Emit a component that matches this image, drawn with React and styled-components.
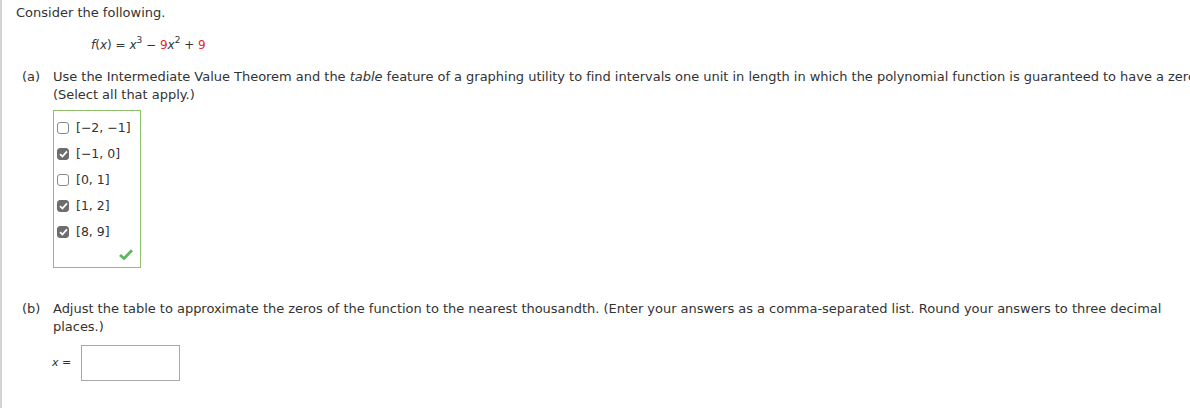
import React from "react";
import styled, { createGlobalStyle } from "styled-components";

const Global = createGlobalStyle`
  html, body { margin: 0; padding: 0; background: #fff; overflow: hidden; }
  body { font-family: "DejaVu Sans", Verdana, sans-serif; color: #333; }
`;

const Page = styled.div`
  width: 1190px;
  height: 408px;
  box-sizing: border-box;
  border-left: 2px solid #d4d4d4;
  padding: 4px 0 0 14px;
  font-size: 13px;
  line-height: 18px;
  overflow: hidden;
`;

const Intro = styled.div`
  margin: 0;
`;

const Formula = styled.div`
  margin: 14px 0 0 75px;
  font-size: 12px;
  white-space: nowrap;
`;

const It = styled.i`
  font-style: italic;
`;

const Red = styled.span`
  color: #e02b2b;
`;

const Sup = styled.sup`
  font-size: 9px;
  line-height: 0;
  position: relative;
  top: -1px;
`;

const Part = styled.div`
  display: flex;
  margin-top: ${(p) => p.$mt}px;
`;

const Label = styled.div`
  width: 37px;
  flex: none;
  padding-left: 6px;
  box-sizing: border-box;
`;

const Body = styled.div`
  flex: 1;
  min-width: 0;
`;

const Line = styled.div`
  white-space: nowrap;
  letter-spacing: -0.025px;
`;

const Answers = styled.div`
  margin-top: 6px;
  width: 88px;
  height: 158px;
  box-sizing: border-box;
  border: 1px solid #8cc06c;
  padding: 4px 0 0 3px;
  position: relative;
`;

const Option = styled.label`
  display: flex;
  align-items: center;
  height: 26px;
  gap: 7px;
  font-size: 12.5px;
`;

const Box = styled.span`
  width: 12px;
  height: 12px;
  box-sizing: border-box;
  border-radius: 3px;
  border: 1px solid ${(p) => (p.$on ? "#6d6d6d" : "#8a8a8a")};
  background: ${(p) => (p.$on ? "#6d6d6d" : "#fff")};
  display: flex;
  align-items: center;
  justify-content: center;
  flex: none;
`;

const Correct = styled.svg`
  position: absolute;
  right: 7px;
  bottom: 7px;
`;

const InputRow = styled.div`
  display: flex;
  align-items: center;
  gap: 10px;
  margin-top: 9px;
  font-size: 11px;
`;

const XLabel = styled.span`
  margin-left: -1px;
`;

const Input = styled.div`
  width: 99px;
  height: 36px;
  box-sizing: border-box;
  border: 1px solid #a8a8a8;
  background: #fff;
`;

const opts = [
  ["[−2, −1]", false],
  ["[−1, 0]", true],
  ["[0, 1]", false],
  ["[1, 2]", true],
  ["[8, 9]", true],
];

export default function App() {
  return (
    <>
      <Global />
      <Page>
        <Intro>Consider the following.</Intro>
        <Formula>
          <It>f</It>(<It>x</It>) = <It>x</It>
          <Sup>3</Sup> − <Red>9</Red>
          <It>x</It>
          <Sup>2</Sup> + <Red>9</Red>
        </Formula>
        <Part $mt={14}>
          <Label>(a)</Label>
          <Body>
            <Line>
              Use the Intermediate Value Theorem and the <i>table</i> feature of a graphing utility to find intervals one unit in length in which the polynomial function is guaranteed to have a zero.
            </Line>
            <Line>(Select all that apply.)</Line>
            <Answers>
              {opts.map(([t, on]) => (
                <Option key={t}>
                  <Box $on={on}>
                    {on && (
                      <svg width="9" height="8" viewBox="0 0 9 8">
                        <path d="M1 4.2 L3.4 6.5 L8 1.3" fill="none" stroke="#fff" strokeWidth="1.8" />
                      </svg>
                    )}
                  </Box>
                  {t}
                </Option>
              ))}
              <Correct width="14" height="11" viewBox="0 0 14 11">
                <path d="M1 6 L5 9.5 L13 1.2" fill="none" stroke="#5cb85c" strokeWidth="2.8" strokeLinejoin="round" />
              </Correct>
            </Answers>
          </Body>
        </Part>
        <Part $mt={32}>
          <Label>(b)</Label>
          <Body>
            <Line>
              Adjust the table to approximate the zeros of the function to the nearest thousandth. (Enter your answers as a comma-separated list. Round your answers to three decimal
            </Line>
            <Line>places.)</Line>
            <InputRow>
              <XLabel><It>x</It> =</XLabel>
              <Input />
            </InputRow>
          </Body>
        </Part>
      </Page>
    </>
  );
}
